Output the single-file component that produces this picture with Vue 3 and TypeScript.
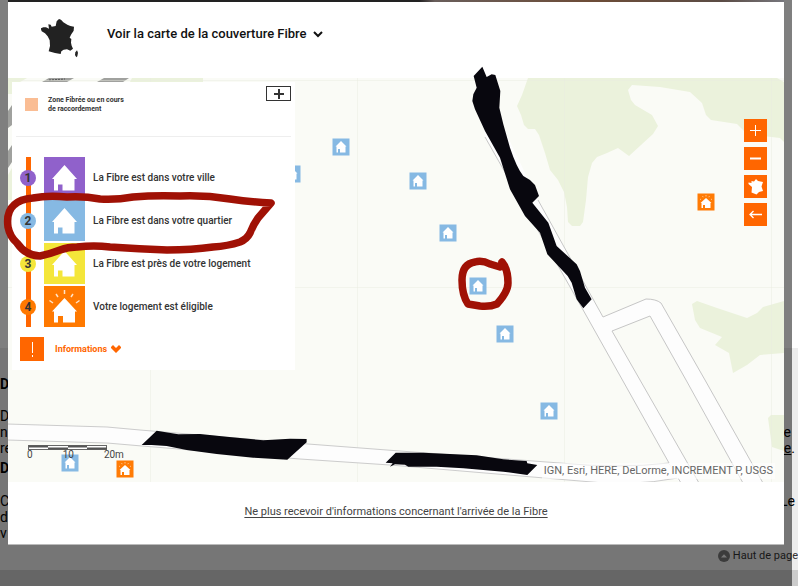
<script setup lang="ts">
interface Step {
  id: number
  label: string
  tone: string
}

interface Marker {
  x: number
  y: number
  eligible: boolean
}

const steps: Step[] = [
  { id: 1, label: 'La Fibre est dans votre ville', tone: 'purple' },
  { id: 2, label: 'La Fibre est dans votre quartier', tone: 'blue' },
  { id: 3, label: 'La Fibre est près de votre logement', tone: 'yellow' },
  { id: 4, label: 'Votre logement est éligible', tone: 'orange' },
]

const markers: Marker[] = [
  { x: 292, y: 174, eligible: false },
  { x: 341, y: 147, eligible: false },
  { x: 418, y: 181, eligible: false },
  { x: 448, y: 233, eligible: false },
  { x: 478, y: 286, eligible: false },
  { x: 505, y: 334, eligible: false },
  { x: 549, y: 411, eligible: false },
  { x: 70, y: 463, eligible: false },
  { x: 125, y: 469, eligible: true },
  { x: 706, y: 202, eligible: true },
]
</script>

<template>
  <div class="page">
    <div class="article">
      <h2 class="line heading"><span>D</span></h2>
      <p class="line"><span>D</span></p>
      <p class="line"><span>n</span><span class="end-a">e</span></p>
      <p class="line"><span>re</span><span class="end-b"><a href="#">e</a>.</span></p>
      <h2 class="line heading second"><span>D</span></h2>
      <p class="line"><span>C</span><span class="end-b">Le</span></p>
      <p class="line"><span>d</span></p>
      <p class="line"><span>v</span></p>
      <a class="to-top" href="#">
        <svg width="12" height="12" viewBox="0 0 12 12" aria-hidden="true">
          <circle cx="6" cy="6" r="6" fill="#777" />
          <path d="M3 7.500 6 4.200 9 7.500Z" fill="#ededed" />
        </svg>
        <span>Haut de page</span>
      </a>
    </div>
    <div class="bottom-band"></div>
    <div class="shade"></div>

    <main class="dialog">
      <div class="photo-strip"></div>
      <header class="top">
        <svg class="france" width="38" height="40" viewBox="18 18 114 120" aria-hidden="true">
          <path d="M72 21 78 23 85 31 97 38 106 42 117 44 116 56 108 68 104 77 109 81 108 92 110 101 114 110 106 116 96 112 86 113 79 118 77 126 60 123 41 118 45 102 44 85 38 73 30 64 20 58 17 49 25 46 33 46 42 50 40 37 47 38 50 44 62 42 65 28Z" fill="#222" />
          <path d="M126 115 129 122 127 133 124 136 120 129 121 121Z" fill="#222" />
        </svg>
        <button class="title" type="button">
          <span>Voir la carte de la couverture Fibre</span>
          <svg width="12" height="8" viewBox="0 0 12 8" aria-hidden="true">
            <path d="M2 2 6 6 10 2" fill="none" stroke="#111" stroke-width="2" />
          </svg>
        </button>
      </header>

      <section class="map">
        <svg class="ground" viewBox="8 78 776 404" preserveAspectRatio="xMidYMid slice" aria-hidden="true">
          <defs>
            <g id="pin-blue">
              <rect x="-8.500" y="-8.500" width="17" height="17" fill="#86b9e3" />
              <path d="M0-6 5.500-.5H4.500V5.500H-1V2H-3V5.500H-4.500V-.5H-5.500Z" fill="#fff" />
            </g>
            <g id="pin-orange">
              <rect x="-8.500" y="-8.500" width="17" height="17" fill="#ff7b05" />
              <path d="M0-4 5.500 1H4.500V6H-1V3H-3V6H-4.500V1H-5.500Z" fill="#fff" />
              <path d="M0-7V-5.500M-3.500-6-2.800-4.800M3.500-6 2.800-4.800M-6-3-5-2.300M6-3 5-2.300" stroke="#ffd2a8" stroke-width=".8" />
            </g>
          </defs>
          <rect x="8" y="78" width="776" height="404" fill="#fafbf6" />
          <g fill="#ebf2dc">
            <path d="M528 78 522 95 517 106 521 115 524 125 528 129H535L539 135 545 153 550 170 558 180 564 192 567 207 568 222 572 226H580L583 222 586 200 588 177 592 163 597 157 607 153 618 148 629 156 653 134 658 126 652 115 635 105 631 100 628 90 632 85 660 87 690 92 702 103 706 115 711 120 737 124 745 132 763 136 780 138 784 142V82L777 78Z" />
            <path d="M692 304 697 301 717 308 747 318 757 313 763 307 784 301V353L760 355 747 365 733 373 729 353 715 345 722 337 700 328 695 320Z" />
            <path d="M768 418 771 415H784V451L772 447Z" />
            <path d="M8 78H27L20 82 12 94H8ZM132 78H203V82H130ZM8 175 12 168V200H8Z" />
          </g>
          <g fill="#a0a19e">
            <path d="M49 78H74L67 82H42ZM104 78H129L123 82H97ZM8 111 12 105V125L8 128ZM8 151 12 145V162L8 168Z" />
          </g>
          <path d="M49 80 65 79" stroke="#555" stroke-dasharray="2 1" />
          <path d="M8 80.500H784M8 287.500H784M150.500 78V482M357.500 78V482M564.500 78V482M771.500 78V482" stroke="#e8ebe0" stroke-opacity=".45" />
          <path d="M7 424 107 427 140 430 308 444 400 451 560 463Q620 469 669 463L678 478Q630 487 580 481L390 465 300 459 142 446 107 443 7 440Z" fill="#fdfdfd" stroke="#ccc" />
          <path d="M482 100 485 137 582 308 671 467 680 484H699L612 331 650 316 743 483H763L660 301 646 299 603 317 538 200 495 110Z" fill="#fdfdfd" />
          <path d="M485 137 582 308 669 463M678 478 681 483M538 200 603 317 646 299Q656 299 661 303L705 380 763 483M743 483 686 380 650 316 612 331 640 380 699 483" fill="none" stroke="#c6c6c6" />
          <use v-for="(m, i) in markers" :key="i" :href="m.eligible ? '#pin-orange' : '#pin-blue'" :x="m.x" :y="m.y" />
          <rect x="28.500" y="445.500" width="78" height="4" fill="#fff" stroke="#666" />
          <path d="M29 446.500H48M68 446.500H87M48 448.500H68M87 448.500H107" stroke="#555" stroke-width="2" />
        </svg>

        <div class="scale"><span>0</span><span>10</span><span>20m</span></div>
        <div class="credits">IGN, Esri, HERE, DeLorme, INCREMENT P, USGS</div>

        <aside class="legend">
          <div class="zone">
            <span class="swatch"></span>
            <span class="zone-text">Zone Fibrée ou en cours<br />de raccordement</span>
            <button class="expand" type="button" aria-label="Agrandir">
              <svg width="12" height="12" viewBox="0 0 12 12" aria-hidden="true">
                <path d="M6 1V11M1 6H11" stroke="#333" stroke-width="2" />
              </svg>
            </button>
          </div>
          <ol class="steps">
            <li v-for="s in steps" :key="s.id" class="step" :class="s.tone">
              <span class="badge">{{ s.id }}</span>
              <svg class="tile" width="41" height="41" viewBox="0 0 41 41" aria-hidden="true">
                <path v-if="s.id < 4" d="M20.500 8 33 22H30.500V33.500H18.500V27.500H14V33.500H10V22H8Z" fill="#fff" />
                <g v-else>
                  <path d="M20.500 12 33 25.500H31V36.500H19V30H14V36.500H10V25.500H8Z" fill="#fff" />
                  <path d="M20.500 4V8M12 8 14 11M29 8 27 11M5.500 14.500 9 17M35.500 14.500 32 17" stroke="#ffe3c8" stroke-width="1.500" />
                </g>
              </svg>
              <span>{{ s.label }}</span>
            </li>
          </ol>
          <button class="infos" type="button">
            <span class="bang">
              <svg width="24" height="24" viewBox="0 0 24 24" aria-hidden="true">
                <path d="M12.500 5V16M12.500 18V20" stroke="#fff" />
              </svg>
            </span>
            <span>Informations</span>
            <svg width="10" height="8" viewBox="0 0 10 8" aria-hidden="true">
              <path d="M0 2 2 0 5 3 8 0 10 2V3L5 8 0 3Z" fill="#f60" />
            </svg>
          </button>
        </aside>

        <nav class="controls" aria-label="Carte">
          <button type="button" aria-label="Zoomer">
            <svg width="23" height="23" viewBox="0 0 23 23"><path d="M11.500 6V17M6 11.500H17" stroke="#fff" /></svg>
          </button>
          <button type="button" aria-label="Dézoomer">
            <svg width="23" height="23" viewBox="0 0 23 23"><path d="M6 11.500H17" stroke="#fff" stroke-width="2" /></svg>
          </button>
          <button type="button" aria-label="France">
            <svg width="23" height="23" viewBox="0 0 23 23">
              <path d="M12 4 14 6 19 7 17.500 11.500 19 16 15 17 12.500 19.500 7.500 17.500 8 12 4.500 9 4.500 7.500 7.500 8 7.500 6 10 6.500Z" fill="#fff" />
            </svg>
          </button>
          <button type="button" aria-label="Retour">
            <svg width="23" height="23" viewBox="0 0 23 23">
              <path d="M18 11.500H6M9.500 8 6 11.500 9.500 15" fill="none" stroke="#fff" stroke-width="1.300" />
            </svg>
          </button>
        </nav>
      </section>

      <footer class="foot">
        <a href="#">Ne plus recevoir d'informations concernant l'arrivée de la Fibre</a>
      </footer>
    </main>

    <svg class="ink" width="798" height="586" viewBox="0 0 798 586" aria-hidden="true">
      <g fill="#08070e">
        <path transform="translate(430 61) scale(.3333)" d="M157 17 170 48 185 40 196 42 211 90 208 140 220 190 240 260Q260 320 280 345L300 357 315 372 327 405 307 425 355 485 380 555 440 610 450 630 465 680 485 715 460 742 440 715 425 665 413 645 352 580 330 515 285 465 240 385 210 290 165 210 135 145 127 120 130 100 140 80 131 45Z" />
        <path transform="translate(0 370) scale(.3333)" d="M425 225 470 182 535 193 600 192 680 200 790 211 870 206 920 207V217L862 269 760 263 650 252 560 240 500 228 455 225Z" />
        <path transform="translate(290 400) scale(.3333)" d="M287 188 317 158 400 158 480 162 560 166 640 178 710 183 712 190 742 195 712 225 640 215 520 205 440 200 355 200 345 194 315 193 300 200 308 190Z" />
      </g>
      <g fill="none" stroke="#a01105" stroke-width="7.500" stroke-linecap="round" stroke-linejoin="round">
        <path d="M271 203Q250 202 230 199 205 195 180 196 155 195 133 197 116 200 100 199 84 196 67 197 48 195 33 198 20 199 14 205 6 212 8 227 10 237 17 243 26 256 40 256 50 254 60 250 68 247 77 247 94 245 110 247 140 249 167 250 192 250 213 247 228 246 240 242 247 239 250 233 253 225 258 218Z" />
        <path d="M502 262Q508 269 508 283 508 292 497 304 490 307 480 306L468 304Q462 295 462 280 462 264 475 262 482 260 490 264L500 267" />
      </g>
    </svg>
  </div>
</template>

<style>
body {
  margin: 0;
}
</style>

<style scoped>
.page {
  position: relative;
  min-height: 100vh;
  display: flex;
  flex-direction: column;
  overflow: hidden;
  font-family: Roboto, "Liberation Sans", sans-serif;
  color: #333;
}

button {
  border: 0;
  padding: 0;
  background: none;
  font: inherit;
  color: inherit;
  cursor: pointer;
}

svg {
  display: block;
  flex: none;
}

.article {
  flex: 1;
  margin-top: 348px;
  padding-top: 28px;
  background: #ededed;
  color: #000;
  font-size: 14px;
  line-height: 16px;
}

.line {
  display: flex;
  justify-content: space-between;
  margin: 0;
  font-size: 14px;
}

.heading {
  font-weight: 700;
  margin-bottom: 16px;
}

.second {
  margin-top: 4px;
  margin-bottom: 17px;
}

.line a {
  color: inherit;
}

.end-a {
  margin-right: 7px;
}

.end-b {
  margin-right: 3px;
}

.to-top {
  display: flex;
  align-items: center;
  justify-content: flex-end;
  gap: 3px;
  margin-top: 7px;
  color: #333;
  font-size: 11px;
  text-decoration: none;
}

.bottom-band {
  height: 16px;
  background: #ccc;
}

.shade {
  position: absolute;
  inset: 0 6px 0 0;
  background: rgba(0, 0, 0, 0.5);
}

.dialog {
  position: absolute;
  top: 0;
  left: 8px;
  right: 14px;
  background: #fff;
}

.photo-strip {
  height: 2px;
  background: linear-gradient(90deg, #222 53%, #695e5b 55%, #6d4c37 75%, #5b4c45 92%, #77777d);
}

.top {
  display: flex;
  align-items: flex-start;
  gap: 28px;
  height: 60px;
  padding: 16px 33px 0;
}

.title {
  display: flex;
  align-items: center;
  gap: 5px;
  color: #111;
  font-size: 13px;
  font-weight: 500;
  line-height: 32px;
}

.map {
  position: relative;
  height: 404px;
}

.ground {
  width: 100%;
  height: 100%;
}

.scale {
  position: absolute;
  left: 19px;
  top: 371px;
  display: flex;
  gap: 30px;
  font-size: 10px;
  line-height: 12px;
  color: #444;
}

.credits {
  position: absolute;
  right: 9px;
  bottom: 3px;
  padding: 0 2px;
  background: rgba(255, 255, 255, 0.6);
  font-size: 11px;
  line-height: 16px;
  color: #666;
}

.legend {
  position: absolute;
  left: 4px;
  top: 4px;
  width: 283px;
  height: 288px;
  background: #fff;
}

.zone {
  display: flex;
  align-items: flex-start;
  gap: 10px;
  height: 50px;
  margin: 0 4px;
  padding: 4px 0 0 9px;
  border-bottom: 1px solid #eee;
}

.swatch {
  width: 13px;
  height: 13px;
  margin-top: 12px;
  background: #fabd94;
}

.zone-text {
  margin-top: 10px;
  font-size: 7px;
  font-weight: 700;
  line-height: 9px;
}

.expand {
  display: flex;
  align-items: center;
  justify-content: center;
  width: 25px;
  height: 15px;
  margin-left: auto;
  border: 1px solid #333;
}

.steps {
  display: flex;
  flex-direction: column;
  gap: 2px;
  margin: 20px 0 0 8px;
  padding: 0;
  list-style: none;
  background: linear-gradient(#f60, #f60) 6px 0 / 5px 100% no-repeat;
}

.step {
  display: flex;
  align-items: center;
  gap: 8px;
  font-size: 10px;
  font-weight: 500;
}

.badge {
  width: 16px;
  height: 16px;
  border-radius: 50%;
  font-size: 12px;
  font-weight: 700;
  line-height: 16px;
  text-align: center;
}

.purple > .badge,
.purple > .tile {
  background: #9061cb;
}

.blue > .badge,
.blue > .tile {
  background: #86b9e3;
}

.yellow > .badge,
.yellow > .tile {
  background: #f4e63a;
}

.orange > .badge,
.orange > .tile {
  background: #ff7900;
}

.infos {
  display: flex;
  align-items: center;
  gap: 4px;
  margin: 10px 0 0 8px;
  color: #f60;
  font-size: 9px;
  font-weight: 700;
}

.bang {
  margin-right: 7px;
  background: #f60;
}

.controls {
  position: absolute;
  right: 17px;
  top: 41px;
  display: flex;
  flex-direction: column;
  gap: 5px;
}

.controls button {
  background: #f60;
}

.foot {
  padding: 22px 0 24px;
  border-bottom: 1px solid #bbb;
  font-size: 11px;
  line-height: 16px;
  text-align: center;
}

.foot a {
  color: #444;
  text-underline-offset: 2px;
}

.ink {
  position: absolute;
  left: 0;
  top: 0;
  pointer-events: none;
}
</style>
